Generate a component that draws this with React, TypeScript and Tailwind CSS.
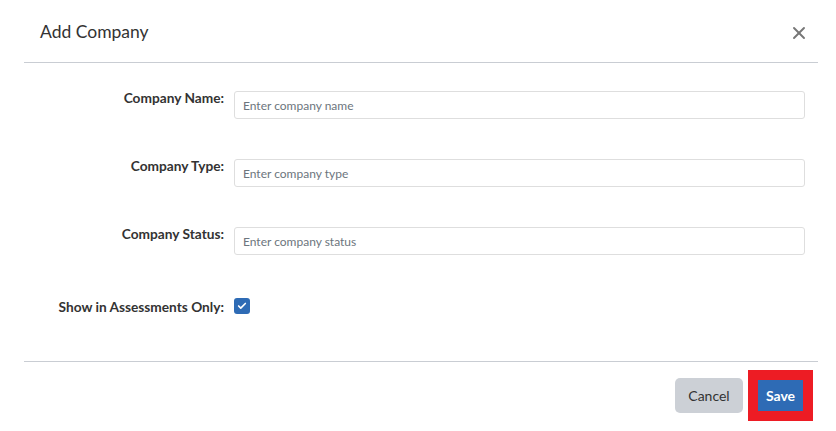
import { X, Check } from 'lucide-react';

const FIELDS = [
  { id: "name", label: "Company Name:", placeholder: "Enter company name" },
  { id: "type", label: "Company Type:", placeholder: "Enter company type" },
  { id: "status", label: "Company Status:", placeholder: "Enter company status" },
];

export default function App() {
  return (
    <div className="h-[431px] w-[836px] bg-white font-['Lato','Liberation_Sans',sans-serif] text-[#333]">
      <div className="ml-[24px] w-[794px]">
        <div className="flex h-[63px] items-center justify-between border-b border-[#c9cdd3] pl-4 pr-[9px] pt-[3px]">
          <h2 className="text-[17.5px] font-normal text-[#333]">Add Company</h2>
          <button className="text-[#777]">
            <X className="size-[20px]" strokeWidth={2.3} />
          </button>
        </div>

        <div className="flex flex-col gap-[40px] pr-[13px] pt-[28px]">
          {FIELDS.map(f => (
            <div key={f.id} className="flex items-start gap-[10px]">
              <label htmlFor={f.id} className="w-[200px] shrink-0 text-right text-[13.7px] font-bold leading-none text-[#333]">
                {f.label}
              </label>
              <input
                id={f.id}
                placeholder={f.placeholder}
                className="h-[28px] flex-1 rounded-[3px] border border-[#dedede] px-2 text-[12px] text-[#333] placeholder:text-[#6c757d] focus:outline-none"
              />
            </div>
          ))}
        </div>

        <div className="flex items-start gap-[10px] pb-[47px] pt-[43px]">
          <span className="w-[200px] shrink-0 pt-[2px] text-right text-[13.7px] font-bold leading-none text-[#333]">
            Show in Assessments Only:
          </span>
          <span className="grid size-[16px] place-items-center rounded-[3px] bg-[#2e6bb5]">
            <Check className="size-[10px] text-white" strokeWidth={4} />
          </span>
        </div>

        <div className="flex items-start justify-end gap-[5px] border-t border-[#c9cdd3] pr-[5px] pt-[8px]">
          <button className="mt-[8px] h-[35px] w-[68px] rounded-[5px] bg-[#ccd0d6] text-[14px] text-[#333]">
            Cancel
          </button>
          <div className="border-[10px] border-[#ed1c24]">
            <button className="h-[31px] w-[45px] bg-[#2e6bb5] text-[14px] font-bold text-white">
              Save
            </button>
          </div>
        </div>
      </div>
    </div>
  );
}
